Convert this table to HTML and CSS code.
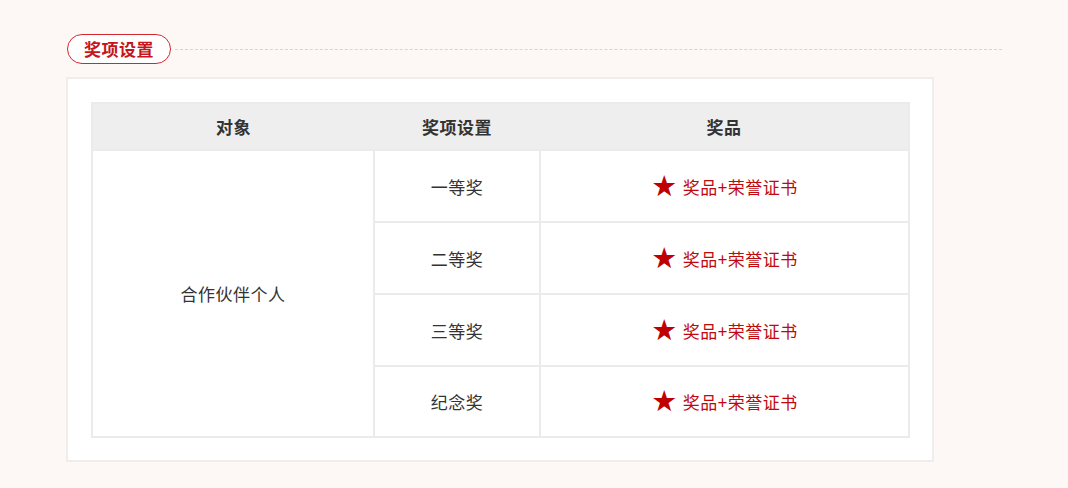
FILE: index.html
```html
<!DOCTYPE html>
<html lang="zh">
<head>
<meta charset="utf-8">
<link rel="stylesheet" href="styles.css">
</head>
<body>
<div class="wrap">
  <div class="section-head">
    <span class="pill">奖项设置</span>
    <span class="dash"></span>
  </div>
  <div class="card">
    <table class="awards">
      <colgroup><col class="c1"><col class="c2"><col class="c3"></colgroup>
      <thead>
        <tr><th>对象</th><th>奖项设置</th><th>奖品</th></tr>
      </thead>
      <tbody>
        <tr><td rowspan="4">合作伙伴个人</td><td>一等奖</td><td><span class="prize"><span class="star">★</span>奖品+荣誉证书</span></td></tr>
        <tr><td>二等奖</td><td><span class="prize"><span class="star">★</span>奖品+荣誉证书</span></td></tr>
        <tr><td>三等奖</td><td><span class="prize"><span class="star">★</span>奖品+荣誉证书</span></td></tr>
        <tr><td>纪念奖</td><td><span class="prize"><span class="star">★</span>奖品+荣誉证书</span></td></tr>
      </tbody>
    </table>
  </div>
</div>
</body>
</html>
```

FILE: styles.css
```css
html, body {
  margin: 0;
  padding: 0;
  background: #fdf8f6;
  font-family: "Noto Sans CJK SC", "Noto Sans", sans-serif;
  color: #333;
}
.wrap {
  padding: 34px 0 0 66px;
  width: 936px;
}
.section-head {
  display: flex;
  align-items: center;
  height: 30px;
}
.pill {
  box-sizing: border-box;
  height: 30px;
  padding: 0 16px;
  border: 1.5px solid #d1282e;
  border-radius: 15px;
  color: #c4161c;
  font-weight: bold;
  font-size: 17px;
  letter-spacing: 0.5px;
  line-height: 27px;
  background: #fff;
  margin-left: 1px;
}
.dash {
  flex: 1;
  border-top: 1px dashed #efcaca;
  margin-left: 4px;
}
.card {
  margin-top: 13px;
  box-sizing: border-box;
  width: 868px;
  background: #fff;
  border: 2px solid #f0eeec;
  padding: 23px 23px 22px 23px;
}
.awards {
  width: 817px;
  border-collapse: collapse;
  border: 2px solid #ebebeb;
  table-layout: fixed;
}
.c1 { width: 282px; }
.c2 { width: 166px; }
.c3 { width: 369px; }
.awards th {
  background: #eeeeee;
  height: 45px;
  font-size: 17px;
  letter-spacing: 0.5px;
  font-weight: bold;
  color: #333;
  padding: 0;
}
.awards td {
  border: 2px solid #ebebeb;
  height: 70px;
  text-align: center;
  font-size: 17px;
  letter-spacing: 0.5px;
  color: #333;
  padding: 0;
}
.awards tbody tr:last-child td {
  height: 69px;
}
.prize {
  color: #c0080e;
  display: inline-flex;
  align-items: center;
}
.star {
  font-size: 29px;
  line-height: 1;
  margin-right: 5px;
  color: #c00000;
  font-family: "DejaVu Sans", sans-serif;
}
```
